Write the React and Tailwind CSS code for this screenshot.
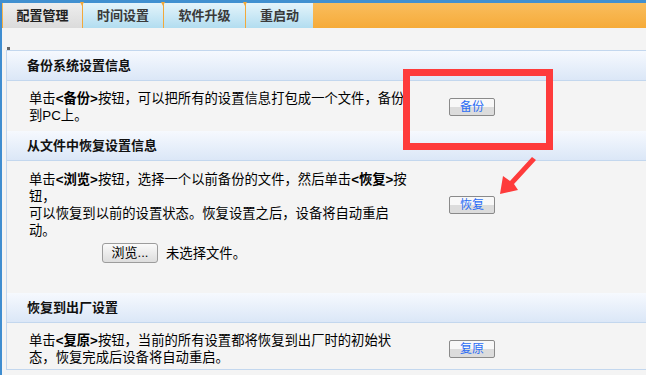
import React from "react";

const tabs = [
  { label: "配置管理", w: "w-[79px]", active: true },
  { label: "时间设置", w: "w-[81px]" },
  { label: "软件升级", w: "w-[82px]" },
  { label: "重启动", w: "w-[68px]" },
];

const SmallButton = ({ children }) => (
  <button className="ml-[42px] w-[46px] h-[18px] shrink-0 border border-[#8a8a8a] rounded-[2px] bg-linear-to-b from-[#f8f8f8] from-50% to-[#dcdcdc] to-50% text-[12px] leading-[16px] text-[#2a6cf5]">
    {children}
  </button>
);

const SectionHeader = ({ children }) => (
  <div className="h-[30px] pl-[20px] flex items-center border-b border-[#c3d7ee] bg-linear-to-b from-[#f6f9fe] to-[#dbe7f7] text-[13px] font-bold text-[#111]">
    {children}
  </div>
);

const App = () => {
  return (
    <div className="relative w-[646px] h-[375px] overflow-hidden bg-[#f4f4f4] font-['Liberation_Sans','Noto_Sans_CJK_SC',sans-serif] text-black">
      {/* 顶部蓝条 */}
      <div className="h-[3px] bg-[#4190d0]" />

      <div className="border-l-2 border-[#3f8dd0] h-[372px]">
        {/* 标签栏 */}
        <div className="h-[25px] flex pl-[1px] bg-linear-to-b from-[#f9bd5c] to-[#f6ab38]">
          {tabs.map((tab, i) => (
            <div
              key={tab.label}
              className={`${tab.w} relative h-full flex items-center justify-center text-[13px] font-bold ${
                tab.active
                  ? "bg-linear-to-b from-[#eeeeee] to-[#dbdbdb] text-[#222]"
                  : "bg-linear-to-b from-[#e4f4fb] to-[#b2ddf0] text-[#3a3a3a] border-l border-[#f2a93a]"
              }`}
            >
              {i > 0 && (
                <span className="absolute -top-[1px] -left-[3px] w-0 h-0 border-l-[2.5px] border-r-[2.5px] border-t-[4px] border-l-transparent border-r-transparent border-t-[#f2a93a]" />
              )}
              {tab.label}
            </div>
          ))}
        </div>

        <div className="mt-[19px] ml-[5px] w-[3px] h-[3px] bg-[#666]" />

        {/* 面板 */}
        <div className="ml-[4px] border-l border-t border-b border-[#c3d7ee]">
          <SectionHeader>备份系统设置信息</SectionHeader>
          <div className="flex items-center pl-[22px] pt-[9px] pb-[7px] text-[13.33px] leading-[17px]">
            <div className="w-[378px] shrink-0 whitespace-nowrap">
              单击<b>&lt;备份&gt;</b>按钮，可以把所有的设置信息打包成一个文件，备份
              <br />
              到PC上。
            </div>
            <SmallButton>备份</SmallButton>
          </div>

          <SectionHeader>从文件中恢复设置信息</SectionHeader>
          <div className="pt-[10px] pb-[30px] text-[13.33px] leading-[17px]">
            <div className="flex items-center pl-[22px]">
              <div className="w-[378px] shrink-0 whitespace-nowrap">
                单击<b>&lt;浏览&gt;</b>按钮，选择一个以前备份的文件，然后单击<b>&lt;恢复&gt;</b>按
                <br />
                钮，
                <br />
                可以恢复到以前的设置状态。恢复设置之后，设备将自动重启
                <br />
                动。
              </div>
              <SmallButton>恢复</SmallButton>
            </div>
            <div className="mt-[4px] pl-[95px] h-[20px] flex items-center">
              <button className="w-[56px] h-[20px] border border-[#9c9c9c] rounded-[3px] bg-linear-to-b from-[#fafafa] to-[#dddddd] text-[13px] leading-[18px] text-black">
                浏览...
              </button>
              <span className="ml-[8px]">未选择文件。</span>
            </div>
          </div>

          <SectionHeader>恢复到出厂设置</SectionHeader>
          <div className="flex items-center pl-[22px] pt-[9px] pb-[3px] text-[13.33px] leading-[17px]">
            <div className="w-[378px] shrink-0 whitespace-nowrap">
              单击<b>&lt;复原&gt;</b>按钮，当前的所有设置都将恢复到出厂时的初始状
              <br />
              态，恢复完成后设备将自动重启。
            </div>
            <SmallButton>复原</SmallButton>
          </div>
        </div>
      </div>

      {/* 红色标注框 */}
      <div className="absolute left-[403px] top-[69px] w-[150px] h-[81px] border-[7px] border-[#fe3b3b]" />

      {/* 红色箭头 */}
      <svg
        className="absolute left-0 top-0"
        width="646"
        height="375"
        viewBox="0 0 646 375"
      >
        <polygon
          points="532,157 536,160 514,184 518,190 500,194 503,176 510,181"
          fill="#fe3b3b"
        />
      </svg>
    </div>
  );
};

export default App;
